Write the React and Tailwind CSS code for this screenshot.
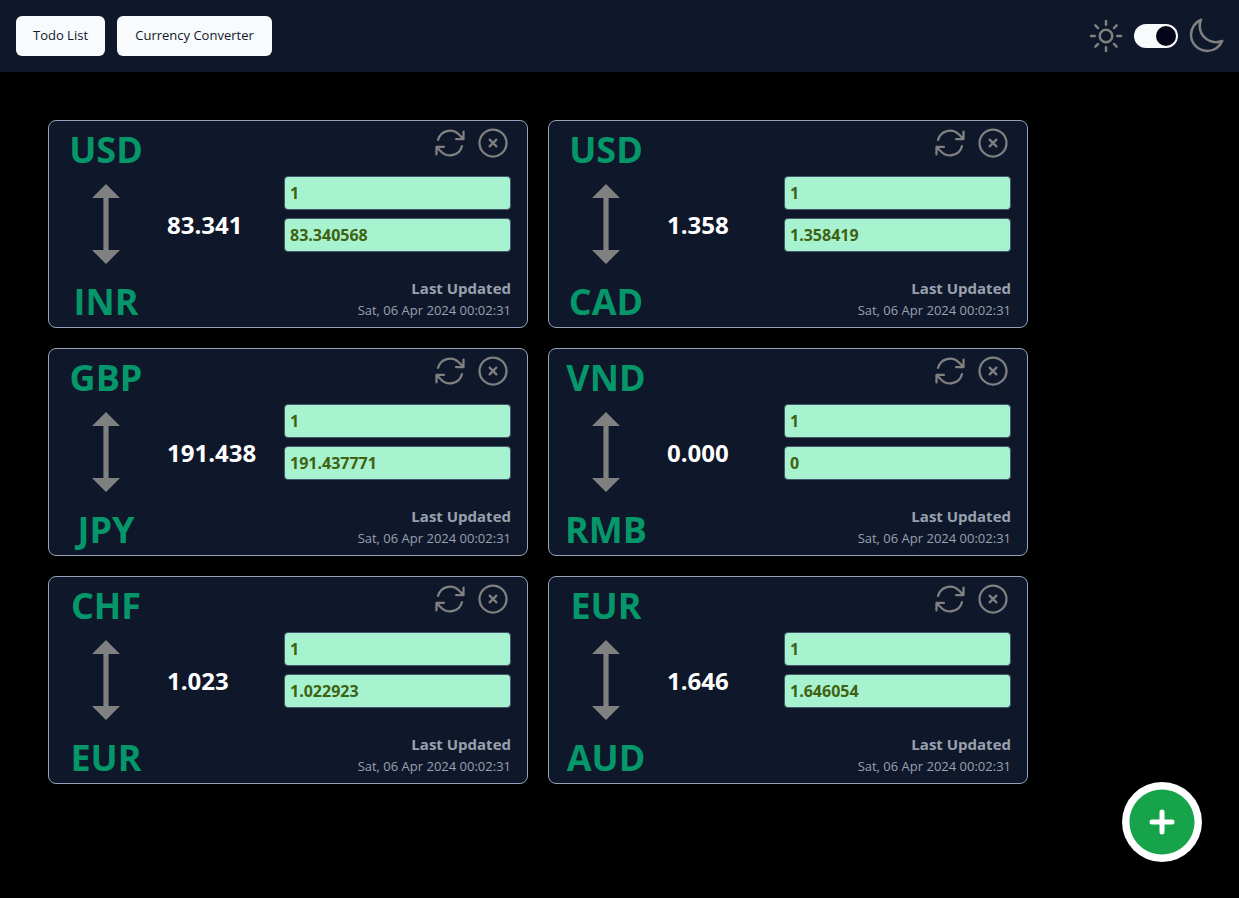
import { useState } from "react";
import {
  HiOutlineArrowPath,
  HiOutlineMoon,
  HiOutlineSun,
  HiOutlineXCircle,
  HiPlusCircle,
} from "react-icons/hi2";

const UPDATED = "Sat, 06 Apr 2024 00:02:31";

const PAIRS = [
  { id: 1, from: "USD", to: "INR", rate: 83.340568 },
  { id: 2, from: "USD", to: "CAD", rate: 1.358419 },
  { id: 3, from: "GBP", to: "JPY", rate: 191.437771 },
  { id: 4, from: "VND", to: "RMB", rate: 0 },
  { id: 5, from: "CHF", to: "EUR", rate: 1.022923 },
  { id: 6, from: "EUR", to: "AUD", rate: 1.646054 },
];

const round = (n) => String(Number(n.toFixed(6)));

function SwapArrow() {
  return (
    <svg viewBox="0 0 28 80" className="mt-3.5 mb-[18px] h-20 w-7" fill="#808080" aria-hidden="true">
      <path d="M14 0 28 14H16.6V66H28L14 80 0 66H11.4V14H0Z" />
    </svg>
  );
}

function AmountInput({ label, value, onChange }) {
  return (
    <input
      type="text"
      inputMode="decimal"
      aria-label={label}
      value={value}
      onChange={(e) => onChange(e.target.value)}
      className="h-[34px] w-full rounded-sm border border-slate-600 bg-[#a7f3d0] px-[5px] text-base font-bold text-[#3f6212] outline-none"
    />
  );
}

function CurrencyCard({ from, to, rate, onRemove }) {
  const [amount, setAmount] = useState("1");
  const [converted, setConverted] = useState(round(rate));

  const changeAmount = (v) => {
    setAmount(v);
    setConverted(round((Number(v) || 0) * rate));
  };
  const changeConverted = (v) => {
    setConverted(v);
    setAmount(rate ? round((Number(v) || 0) / rate) : "0");
  };

  return (
    <article className="flex w-[480px] max-w-full rounded-lg border border-[#94a3b8] bg-[#0f172a] pr-4 pl-[15px]">
      <div className="flex w-[84px] shrink-0 flex-col items-center pt-[9px] pb-[5px]">
        <h2 className="text-4xl leading-10 font-bold text-[#059669]">{from}</h2>
        <SwapArrow />
        <h2 className="text-4xl leading-10 font-bold text-[#059669]">{to}</h2>
      </div>
      <p className="flex flex-1 items-center pt-0.5 pl-[19px] text-2xl font-bold text-white">
        {rate.toFixed(3)}
      </p>
      <div className="flex w-[227px] shrink-0 flex-col pt-1 pb-[7px]">
        <div className="flex justify-end gap-[7px] text-[#808080]">
          <button type="button" aria-label="Refresh rate" onClick={() => changeAmount("1")}>
            <HiOutlineArrowPath className="size-9" />
          </button>
          <button type="button" aria-label="Remove pair" onClick={onRemove}>
            <HiOutlineXCircle className="size-9" />
          </button>
        </div>
        <div className="mt-[15px] flex flex-col gap-2">
          <AmountInput label={`Amount in ${from}`} value={amount} onChange={changeAmount} />
          <AmountInput label={`Amount in ${to}`} value={converted} onChange={changeConverted} />
        </div>
        <div className="mt-auto text-right text-gray-400">
          <p className="text-[15px] leading-6 font-bold">Last Updated</p>
          <p className="text-[13px] leading-5">{UPDATED}</p>
        </div>
      </div>
    </article>
  );
}

export default function App() {
  const [pairs, setPairs] = useState(PAIRS);

  return (
    <div className="min-h-screen bg-black font-['Open_Sans','Noto_Sans',sans-serif]">
      <header className="flex items-center justify-between bg-[#0f172a] py-4 pr-[13px] pl-4">
        <nav className="flex gap-3">
          <button
            type="button"
            className="h-10 min-w-[89px] rounded-md bg-slate-50 px-4 text-[13px] font-medium text-slate-900"
          >
            Todo List
          </button>
          <button
            type="button"
            className="h-10 min-w-[155px] rounded-md bg-slate-50 px-4 text-[13px] font-medium text-slate-900"
          >
            Currency Converter
          </button>
        </nav>
        <div className="flex items-center gap-2 text-[#808080]">
          <HiOutlineSun className="size-10" />
          <input
            type="checkbox"
            role="switch"
            aria-label="Dark mode"
            defaultChecked
            className="flex h-6 w-11 cursor-pointer appearance-none items-center rounded-full bg-slate-700 px-0.5 before:size-5 before:rounded-full before:bg-slate-950 checked:justify-end checked:bg-slate-50"
          />
          <HiOutlineMoon className="size-10" />
        </div>
      </header>

      <main className="flex flex-wrap gap-5 p-12">
        {pairs.map((p) => (
          <CurrencyCard
            key={p.id}
            from={p.from}
            to={p.to}
            rate={p.rate}
            onRemove={() => setPairs(pairs.filter((q) => q.id !== p.id))}
          />
        ))}
      </main>

      <button
        type="button"
        aria-label="Add currency pair"
        className="fixed right-[37px] bottom-9 rounded-full bg-white"
      >
        <HiPlusCircle className="size-20 text-[#16a34a]" />
      </button>
    </div>
  );
}
